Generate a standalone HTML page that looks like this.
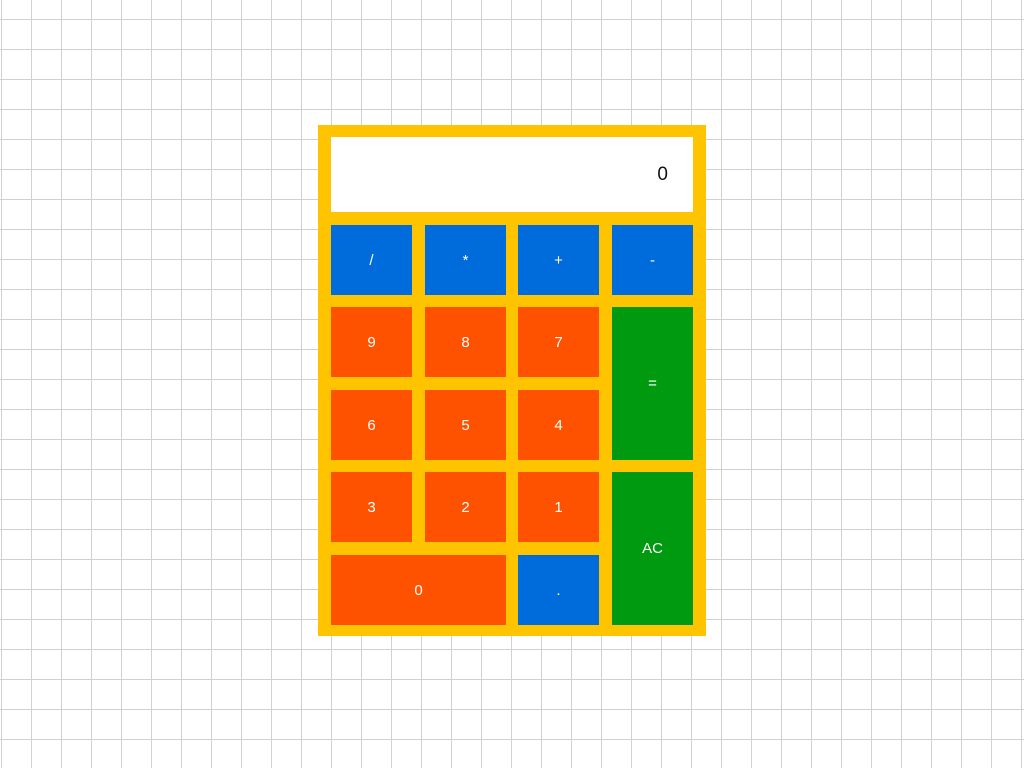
<!DOCTYPE html>
<html><head><meta charset="utf-8"><style>
html,body{margin:0;width:1024px;height:768px;overflow:hidden;background:#fff;}
body{background-image:linear-gradient(to right,#d0d0d0 1px,transparent 1px),linear-gradient(to bottom,#d0d0d0 1px,transparent 1px);background-size:30px 30px;background-position:1px 19px;font-family:"Liberation Sans",sans-serif;}
.calc{position:absolute;left:318px;top:125px;width:388px;height:511px;background:#ffc400;}
.disp{position:absolute;left:13px;top:12px;width:362px;height:75px;background:#fff;color:#111;font-size:19px;line-height:75px;text-align:right;box-sizing:border-box;padding-right:25px;}
.b{position:absolute;width:81px;height:70px;color:#fff;font-size:15px;display:flex;align-items:center;justify-content:center;}
.bl{background:#006bdb}.or{background:#ff5200}.gr{background:#009a10}
</style></head><body>
<div class="calc">
<div class="disp">0</div>
<div class="b bl" style="left:13px;top:100px">/</div>
<div class="b bl" style="left:107px;top:100px">*</div>
<div class="b bl" style="left:200px;top:100px">+</div>
<div class="b bl" style="left:294px;top:100px">-</div>
<div class="b or" style="left:13px;top:182px">9</div>
<div class="b or" style="left:107px;top:182px">8</div>
<div class="b or" style="left:200px;top:182px">7</div>
<div class="b gr" style="left:294px;top:182px;height:153px">=</div>
<div class="b or" style="left:13px;top:265px">6</div>
<div class="b or" style="left:107px;top:265px">5</div>
<div class="b or" style="left:200px;top:265px">4</div>
<div class="b or" style="left:13px;top:347px">3</div>
<div class="b or" style="left:107px;top:347px">2</div>
<div class="b or" style="left:200px;top:347px">1</div>
<div class="b gr" style="left:294px;top:347px;height:153px">AC</div>
<div class="b or" style="left:13px;top:430px;width:175px">0</div>
<div class="b bl" style="left:200px;top:430px">.</div>
</div>
</body></html>
